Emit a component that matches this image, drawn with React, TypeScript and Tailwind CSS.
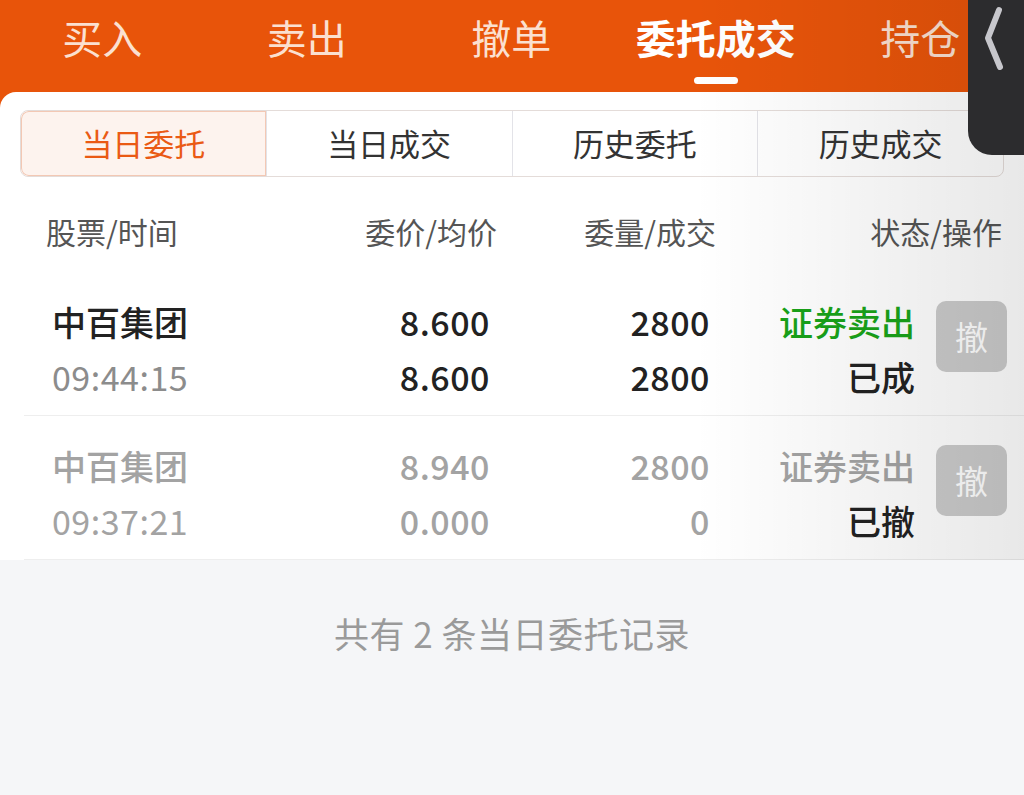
import { ReactNode } from 'react'

const topTabs = ['买入', '卖出', '撤单', '委托成交', '持仓']
const segTabs = ['当日委托', '当日成交', '历史委托', '历史成交']

type Order = {
  name: string
  time: string
  price: string
  avg: string
  qty: string
  done: string
  side: string
  status: string
  active: boolean
}

const orders: Order[] = [
  { name: '中百集团', time: '09:44:15', price: '8.600', avg: '8.600', qty: '2800', done: '2800', side: '证券卖出', status: '已成', active: true },
  { name: '中百集团', time: '09:37:21', price: '8.940', avg: '0.000', qty: '2800', done: '0', side: '证券卖出', status: '已撤', active: false },
]

function Cell({ className, children }: { className: string; children: ReactNode }) {
  return <div className={className}>{children}</div>
}

function OrderRow({ o }: { o: Order }) {
  const main = o.active ? 'text-[#222222]' : 'text-[#a3a3a3]'
  return (
    <div className="ml-[24px] flex h-[144px] border-b border-[#eeeeee]">
      <Cell className="w-[262px] pl-[28px] pt-[22px]">
        <div className={`text-[34px] leading-[55px] font-medium ${main}`}>{o.name}</div>
        <div className={`text-[34px] leading-[55px] tracking-[0.5px] ${o.active ? 'text-[#8c8c8c]' : 'text-[#a3a3a3]'}`}>{o.time}</div>
      </Cell>
      <Cell className="w-[204px] pt-[22px] text-right">
        <div className={`text-[34px] leading-[55px] font-medium tracking-[0.5px] ${main}`}>{o.price}</div>
        <div className={`text-[34px] leading-[55px] font-medium tracking-[0.5px] ${main}`}>{o.avg}</div>
      </Cell>
      <Cell className="w-[220px] pt-[22px] text-right">
        <div className={`text-[34px] leading-[55px] font-medium tracking-[0.5px] ${main}`}>{o.qty}</div>
        <div className={`text-[34px] leading-[55px] font-medium tracking-[0.5px] ${main}`}>{o.done}</div>
      </Cell>
      <Cell className="w-[205px] pt-[22px] text-right">
        <div className={`text-[34px] leading-[55px] font-medium ${o.active ? 'text-[#19a319]' : 'text-[#a3a3a3]'}`}>{o.side}</div>
        <div className="text-[34px] leading-[55px] font-medium text-[#222222]">{o.status}</div>
      </Cell>
      <div className="ml-[21px] pt-[29px]">
        <div className="flex h-[71px] w-[71px] items-center justify-center rounded-[10px] bg-[#cbcbcb] text-[33px] text-white">
          撤
        </div>
      </div>
    </div>
  )
}

export default function App() {
  return (
    <div
      className="relative h-[795px] w-[1024px] overflow-hidden bg-[#f5f6f8]"
      style={{ fontFamily: '"Noto Sans CJK SC", "Noto Sans", sans-serif' }}
    >
      {/* top tabs */}
      <div className="flex h-[108px] bg-[#e8540a]">
        {topTabs.map((t, i) => (
          <div key={t} className="flex w-[204.5px] flex-col items-center pt-[13px]">
            <span
              className={`text-[40px] leading-[48px] ${i === 3 ? 'font-bold text-white' : 'text-[#fbe0d0]'}`}
            >
              {t}
            </span>
            {i === 3 && <div className="mt-[16px] h-[7px] w-[44px] rounded-full bg-white" />}
          </div>
        ))}
      </div>

      {/* card */}
      <div className="relative -mt-[16px] rounded-t-[16px] bg-white">
        <div className="pt-[18px]">
          <div className="mx-[20px] flex h-[67px] overflow-hidden rounded-[8px] border border-[#e4dcd9]">
            {segTabs.map((t, i) => (
              <div
                key={t}
                className={`flex flex-1 items-center justify-center text-[31px] ${
                  i === 0
                    ? 'rounded-l-[8px] bg-[#fdf3ee] text-[#ea5a14] ring-1 ring-inset ring-[#f3c8b4]'
                    : 'border-l border-[#e3e3e8] text-[#333333]'
                }`}
              >
                {t}
              </div>
            ))}
          </div>
        </div>

        {/* column headers */}
        <div className="flex pt-[33px] pb-[20px] text-[30px] leading-[42px] text-[#555555]">
          <div className="w-[300px] pl-[46px]">股票/时间</div>
          <div className="w-[197px] text-right">委价/均价</div>
          <div className="w-[219px] text-right">委量/成交</div>
          <div className="w-[286px] text-right">状态/操作</div>
        </div>

        {orders.map((o) => (
          <OrderRow key={o.time} o={o} />
        ))}
      </div>

      {/* footer */}
      <div className="pt-[49px] text-center text-[35px] leading-[48px] tracking-[0.5px] text-[#9a9a9a]">
        共有 2 条当日委托记录
      </div>

      {/* right-side shade */}
      <div className="pointer-events-none absolute top-0 right-0 h-[560px] w-[330px] bg-gradient-to-r from-transparent to-black/[0.09]" />

      {/* side handle */}
      <div className="absolute top-0 right-0 h-[155px] w-[56px] rounded-bl-[24px] bg-[#2c2c2e]">
        <svg width="56" height="80" viewBox="0 0 56 80" className="block">
          <path
            d="M31 10 L20 38 L32 67"
            fill="none"
            stroke="#c7c7cc"
            strokeWidth="6"
            strokeLinecap="round"
            strokeLinejoin="round"
          />
        </svg>
      </div>
    </div>
  )
}
